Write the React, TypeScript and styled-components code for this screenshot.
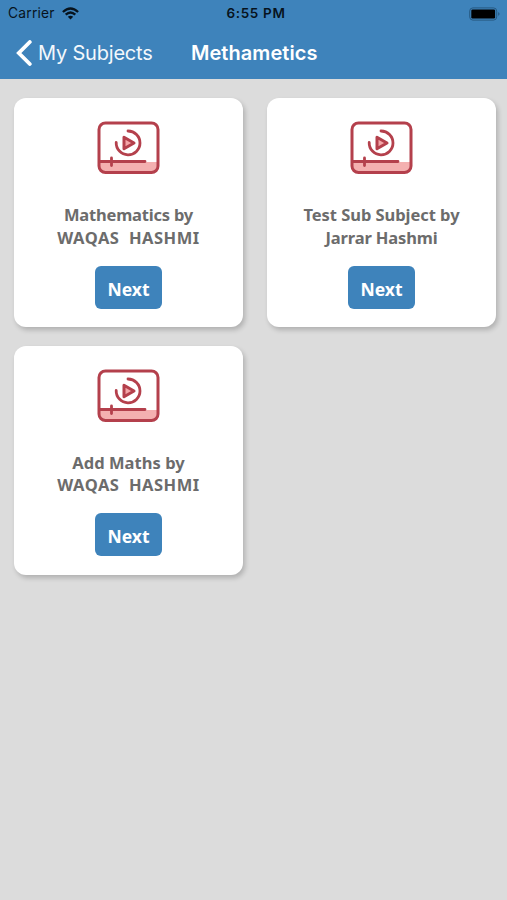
import React from "react";
import styled, { createGlobalStyle } from "styled-components";

const GlobalStyle = createGlobalStyle`
  *, *::before, *::after { box-sizing: border-box; }
  body { margin: 0; background: #dcdcdc; }
`;

const Screen = styled.div`
  min-height: 900px;
  background: #dcdcdc;
  font-family: Inter, sans-serif;
`;

const Header = styled.header`
  height: 79px;
  background: #3e83bb;
`;

const StatusBar = styled.div`
  display: grid;
  grid-template-columns: 1fr auto 1fr;
  align-items: center;
  height: 27px;
  padding: 0 6px 0 8px;
  color: #07131d;
  font-size: 13.8px;
  line-height: 27px;
`;

const Carrier = styled.div`
  display: flex;
  align-items: center;
  gap: 7px;
  letter-spacing: 0.22px;
`;

const Clock = styled.div`
  font-weight: 600;
  font-size: 13.5px;
  letter-spacing: 0.65px;
  padding-left: 3px;
`;

const Battery = styled.svg`
  justify-self: end;
`;

const NavBar = styled.nav`
  display: flex;
  align-items: center;
  height: 52px;
  padding-left: 16px;
  color: #fff;
`;

const BackButton = styled.button`
  display: flex;
  align-items: center;
  gap: 6px;
  width: 175px;
  padding: 0;
  border: 0;
  background: none;
  color: #f3f8fc;
  font: 400 20px/52px Inter, sans-serif;
  letter-spacing: -0.2px;
  white-space: nowrap;
`;

const Title = styled.h1`
  margin: 0;
  font-size: 20px;
  font-weight: 600;
  line-height: 52px;
  letter-spacing: 0.05px;
`;

const Grid = styled.main`
  display: grid;
  grid-template-columns: 229px 229px;
  grid-auto-rows: 229px;
  gap: 18.5px 24px;
  padding: 19px 11px 0 14px;
`;

const Card = styled.article`
  display: flex;
  flex-direction: column;
  align-items: center;
  padding-top: 23px;
  border-radius: 12px;
  background: #fff;
  box-shadow: 2px 3px 5px rgba(0, 0, 0, 0.2);
`;

const CardTitle = styled.h2`
  margin: 30.4px 0 0;
  color: #6c6c6c;
  font: 700 16.5px/22.3px "Noto Sans", sans-serif;
  text-align: center;
  white-space: pre;
`;

const Line = styled.span<{ $tracking: number }>`
  display: block;
  letter-spacing: ${({ $tracking }) => $tracking}px;
`;

const NextButton = styled.button`
  width: 67px;
  height: 43px;
  margin-top: 17px;
  padding: 3px 0 0;
  border: 0;
  border-radius: 6px;
  background: #3e83bb;
  color: #fff;
  font: 700 17.5px/38px "Noto Sans", sans-serif;
`;

const WifiIcon = () => (
  <svg width="17" height="13" viewBox="0 0 17 13" fill="none" stroke="#07131d" strokeWidth="2.3">
    <path d="M.9 5Q8.5-2 16.1 5" />
    <path d="M3.7 7.7Q8.5 3.3 13.3 7.7" />
    <path d="M8.5 12.5 5.8 9.8Q8.5 7.7 11.2 9.8Z" fill="#07131d" stroke="none" />
  </svg>
);

const BatteryIcon = () => (
  <Battery width="32" height="14" viewBox="0 0 32 14">
    <rect x=".7" y=".9" width="27" height="12.2" rx="3.2" fill="none" stroke="#275982" />
    <rect x="2.3" y="2.5" width="23.8" height="9" rx="1.3" fill="#000" />
    <path d="M29.2 5.1Q32 7 29.2 8.9Z" fill="#275982" />
  </Battery>
);

const ChevronIcon = () => (
  <svg width="16" height="26" viewBox="0 0 16 26" fill="none" stroke="#fff" strokeWidth="3.8">
    <path d="M13.8 2 2.8 13 13.8 24" strokeLinecap="round" />
  </svg>
);

const VideoIcon = () => (
  <svg width="63" height="53" viewBox="0 0 63 53" fill="none" stroke="#b4404c" strokeWidth="3" strokeLinecap="round" strokeLinejoin="round">
    <path d="M3 41H60V45Q60 51 53 51H9Q3 51 3 45Z" fill="#f4b0b0" stroke="none" />
    <rect x="2" y="2" width="59" height="49.5" rx="6.5" />
    <path d="M3 40.5H48M14.5 37V44.5" strokeWidth="2.8" />
    <path d="M31 10A11.9 11.9 0 1 1 19.2 21.5" strokeWidth="2.8" />
    <path d="M27 16.2V27.8L37 22Z" fill="#f4a6a8" strokeWidth="3" />
  </svg>
);

type TitleLine = { text: string; tracking: number };

const subjects: TitleLine[][] = [
  [{ text: "Mathematics by", tracking: -0.2 }, { text: "WAQAS  HASHMI", tracking: 0.5 }],
  [{ text: "Test Sub Subject by", tracking: -0.05 }, { text: "Jarrar Hashmi", tracking: -0.15 }],
  [{ text: "Add Maths by", tracking: 0.05 }, { text: "WAQAS  HASHMI", tracking: 0.5 }],
];

export default function App() {
  return (
    <Screen>
      <GlobalStyle />
      <Header>
        <StatusBar>
          <Carrier>Carrier<WifiIcon /></Carrier>
          <Clock>6:55 PM</Clock>
          <BatteryIcon />
        </StatusBar>
        <NavBar>
          <BackButton><ChevronIcon />My Subjects</BackButton>
          <Title>Methametics</Title>
        </NavBar>
      </Header>
      <Grid>
        {subjects.map((lines, index) => (
          <Card key={index}>
            <VideoIcon />
            <CardTitle>
              {lines.map(({ text, tracking }) => (
                <Line key={text} $tracking={tracking}>{text}</Line>
              ))}
            </CardTitle>
            <NextButton>Next</NextButton>
          </Card>
        ))}
      </Grid>
    </Screen>
  );
}
